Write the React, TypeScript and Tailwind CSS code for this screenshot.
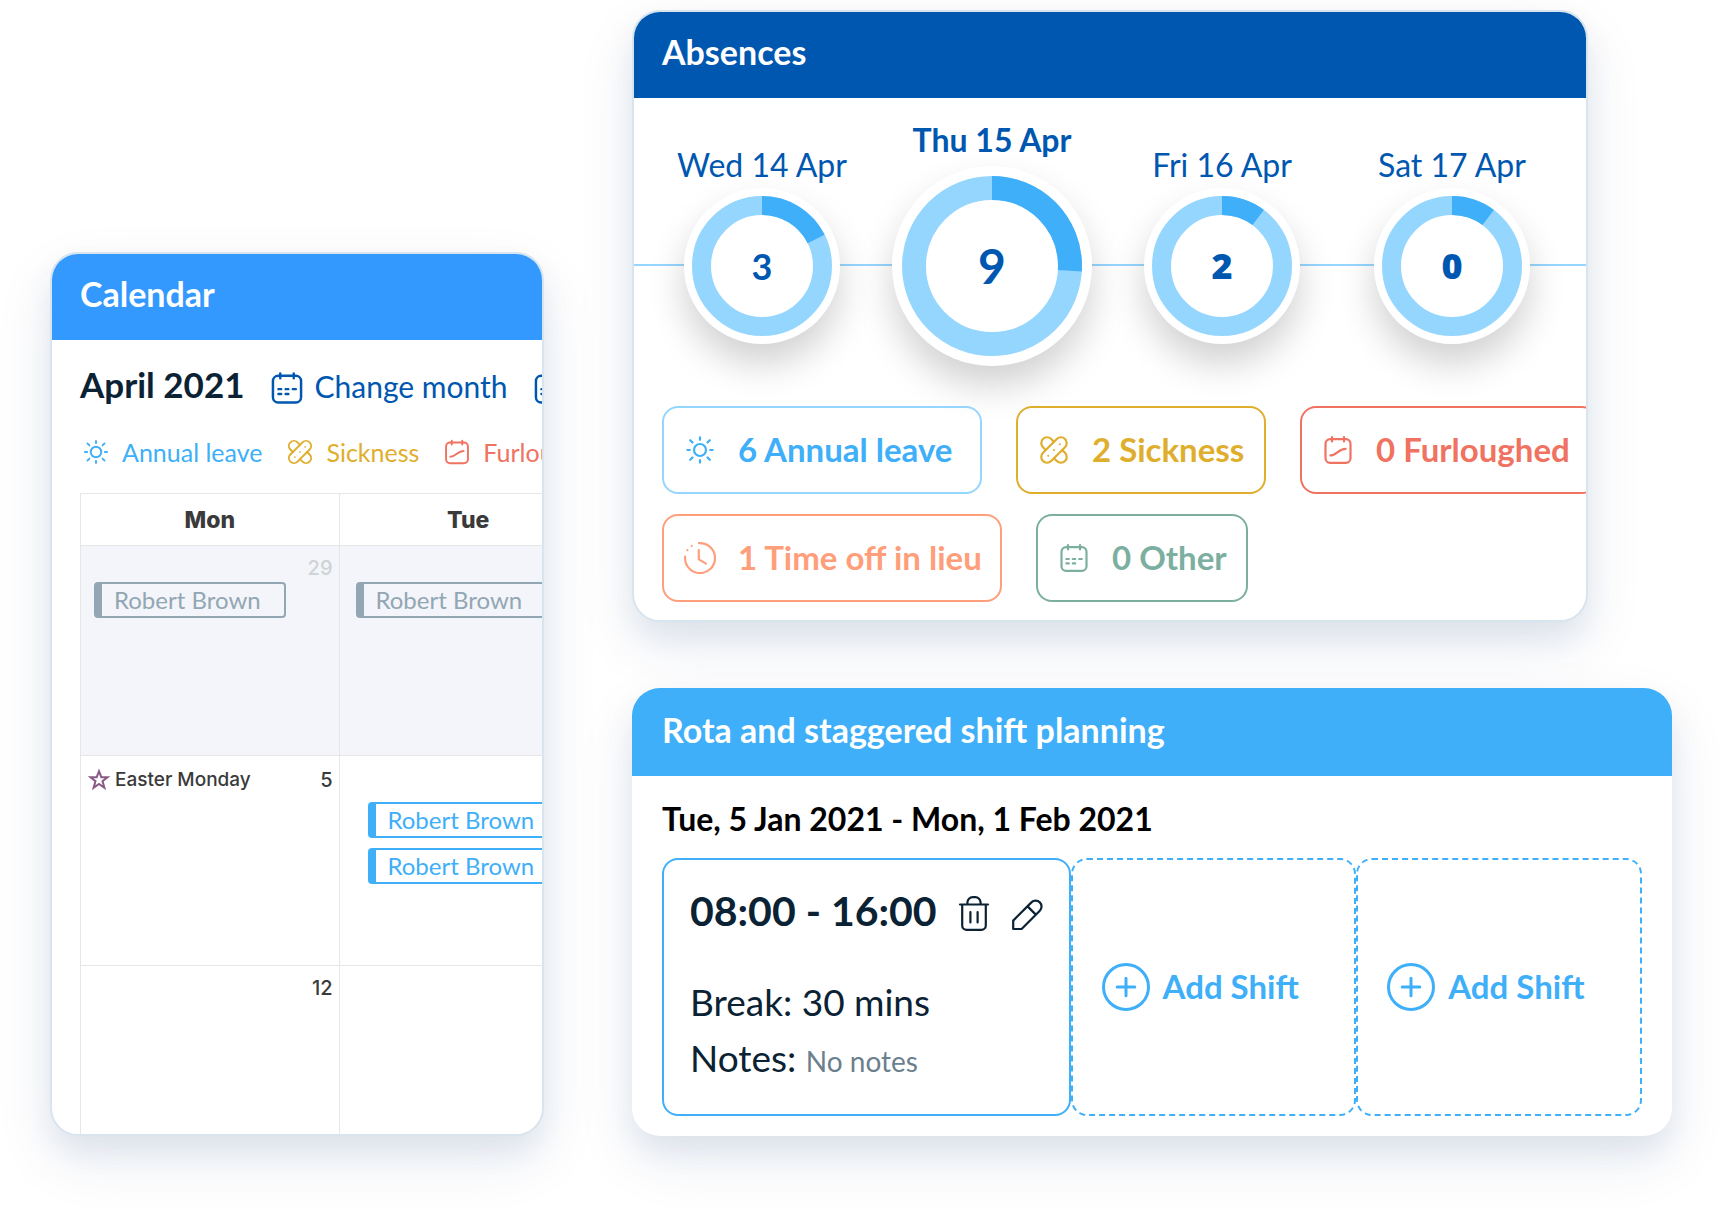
import type { ReactNode } from "react";

type IconProps = { className?: string };

function Icon({ className = "size-8", children }: IconProps & { children: ReactNode }) {
  return (
    <svg
      viewBox="0 0 32 32"
      className={`shrink-0 ${className}`}
      fill="none"
      stroke="currentColor"
      strokeWidth="2.2"
      strokeLinecap="round"
      strokeLinejoin="round"
      aria-hidden="true"
    >
      {children}
    </svg>
  );
}

function SunIcon({ className }: IconProps) {
  return (
    <Icon className={className}>
      <circle cx="16" cy="16" r="6" />
      <path d="M16 3.4v2.4M16 26.2v2.4M3.4 16h2.4M26.2 16h2.4M6.2 6.2l2.3 2.3M23.5 23.5l2.3 2.3M25.8 6.2l-2.3 2.3M8.5 23.5l-2.3 2.3" />
    </Icon>
  );
}

function PlasterIcon({ className }: IconProps) {
  return (
    <Icon className={className}>
      <g transform="translate(16 16) rotate(-45)">
        <rect x="-15.6" y="-5.8" width="31.2" height="11.6" rx="5.8" />
        <path d="M-5.8 -5.8V-9.8A5.8 5.8 0 0 1 5.8 -9.8V-5.8M-5.8 5.8V9.8A5.8 5.8 0 0 0 5.8 9.8V5.8" />
        <path d="M-8.2 0h.01M0 0h.01M8.2 0h.01" strokeWidth="2" />
      </g>
    </Icon>
  );
}

function CalendarFrame() {
  return (
    <>
      <rect x="3.5" y="5.2" width="25" height="23.6" rx="4.6" />
      <path d="M10 3v4.4M22 3v4.4" />
    </>
  );
}

function CalendarIcon({ className }: IconProps) {
  return (
    <Icon className={className}>
      <CalendarFrame />
      <path d="M8.4 17h2.4M14.8 17h2.4M21.2 17h2.6M8.4 21.4h2.4M14.8 21.4h2.4" />
    </Icon>
  );
}

function FurloughIcon({ className }: IconProps) {
  return (
    <Icon className={className}>
      <CalendarFrame />
      <path d="M8.4 21.4C14.5 21.4 16.5 14.8 23.6 14.8" />
    </Icon>
  );
}

function ClockIcon({ className }: IconProps) {
  return (
    <Icon className={className}>
      <path d="M15 1.1A15 15 0 1 1 1.1 14.6" />
      <path d="M14.8 8v9.4L22 21.6" />
      <path d="M7.7 3.8h.01M3.4 8.2h.01" />
    </Icon>
  );
}

function StarIcon() {
  return (
    <svg viewBox="0 0 24 24" className="size-6 shrink-0" fill="none" stroke="#8a5a87" strokeWidth="2" aria-hidden="true">
      <path d="M12 3.2l2.3 6h6.2l-5 3.9 1.9 6.6L12 15.9l-5.4 3.8 1.9-6.6-5-3.9h6.2z" />
    </svg>
  );
}

function TrashIcon() {
  return (
    <svg viewBox="0 0 32 36" className="h-9 w-8" fill="none" stroke="currentColor" strokeWidth="2.2" strokeLinecap="round" aria-hidden="true">
      <path d="M2 9.5h28M9.4 9V7.6A5.4 5.4 0 0 1 14.8 2.2h2.4a5.4 5.4 0 0 1 5.4 5.4V9" />
      <path d="M4.2 10v20.4a4.4 4.4 0 0 0 4.4 4.4h14.8a4.4 4.4 0 0 0 4.4-4.4V10M12.4 17v10.4M19.6 17v10.4" />
    </svg>
  );
}

function PencilIcon() {
  return (
    <Icon>
      <path d="M2.2 30V21.6L20.4 3.4a5.9 5.9 0 0 1 8.4 8.4L10.6 30zM16.6 7.4l8.2 8.2" />
    </Icon>
  );
}

function PlusCircleIcon() {
  return (
    <svg viewBox="0 0 48 48" className="size-12 shrink-0" fill="none" stroke="currentColor" strokeWidth="3" strokeLinecap="round" aria-hidden="true">
      <circle cx="24" cy="24" r="22.5" />
      <path d="M24 15.2v17.6M15.2 24h17.6" />
    </svg>
  );
}

const cardShadow = "shadow-[0_16px_28px_rgba(20,60,120,0.08),0_24px_60px_rgba(20,60,120,0.09)]";

function EventChip({ tone }: { tone: "past" | "current" }) {
  const color = tone === "past" ? "border-[#92a6b3] text-[#92a6b3]" : "border-[#3eaff8] text-[#3eaff8]";
  return (
    <div className={`flex h-9 w-48 items-center rounded border-2 border-l-8 pl-3 text-2xl leading-8 whitespace-nowrap ${color}`}>
      Robert Brown
    </div>
  );
}

const cell = "h-[210px] border border-[#e6e6e6] p-0 align-top";

function CalendarCard() {
  return (
    <section className={`mt-[242px] min-w-0 self-start overflow-hidden rounded-[28px] border-2 border-[#d8e4ee] bg-white ${cardShadow}`}>
      <h2 className="bg-[#3399ff] px-7 pt-5 pb-[26px] text-[34px] leading-10 font-bold text-white">Calendar</h2>
      <div className="overflow-hidden pt-[22px] pl-7">
        <div className="flex items-end gap-6 whitespace-nowrap">
          <h3 className="text-[35px] leading-[44px] font-bold text-[#0a2233]">April 2021</h3>
          <button type="button" className="flex items-end gap-2.5 text-[30px] leading-10 text-[#0057b0]">
            <CalendarIcon className="size-9" />
            Change month
          </button>
          <button type="button" aria-label="Calendar options" className="text-[#0057b0]">
            <CalendarIcon className="size-9" />
          </button>
        </div>
        <ul className="mt-[30px] flex items-center gap-6 pl-0.5 text-[25px] leading-8 whitespace-nowrap">
          <li className="flex items-center gap-3 text-[#3eaff8]">
            <SunIcon className="size-7" />
            Annual leave
          </li>
          <li className="flex items-center gap-3 text-[#e0ae2d]">
            <PlasterIcon className="size-7" />
            Sickness
          </li>
          <li className="flex items-center gap-3 text-[#f07261]">
            <FurloughIcon className="size-7" />
            Furloughed
          </li>
        </ul>
        <table className="mt-[25px] w-[518px] table-fixed border-collapse text-[#3a3a3a]">
          <thead>
            <tr className="h-[52px] font-[Inter,sans-serif] text-[23px] leading-8">
              <th className="border border-[#e6e6e6] p-0 font-extrabold">Mon</th>
              <th className="border border-[#e6e6e6] p-0 font-extrabold">Tue</th>
            </tr>
          </thead>
          <tbody>
            <tr className="bg-[#f3f5fa]">
              <td className={cell}>
                <div className="pt-2 pr-1.5 text-right font-[Inter,sans-serif] text-xl leading-7 font-medium text-[#cfd2d6]">29</div>
                <div className="pl-[13px]">
                  <EventChip tone="past" />
                </div>
              </td>
              <td className={cell}>
                <div className="pt-9 pl-4">
                  <EventChip tone="past" />
                </div>
              </td>
            </tr>
            <tr>
              <td className={cell}>
                <div className="flex items-center px-1.5 pt-2.5 font-[Inter,sans-serif] leading-7 font-medium">
                  <StarIcon />
                  <span className="pl-1 text-[19px]">Easter Monday</span>
                  <span className="ml-auto text-xl leading-7">5</span>
                </div>
              </td>
              <td className={cell}>
                <div className="flex flex-col gap-2.5 pt-[46px] pl-7">
                  <EventChip tone="current" />
                  <EventChip tone="current" />
                </div>
              </td>
            </tr>
            <tr>
              <td className="h-[168px] border border-b-0 border-[#e6e6e6] p-0 align-top">
                <div className="pt-2 pr-1.5 text-right font-[Inter,sans-serif] text-xl leading-7 font-medium">12</div>
              </td>
              <td className="border border-b-0 border-[#e6e6e6] p-0" />
            </tr>
          </tbody>
        </table>
      </div>
    </section>
  );
}

type Day = { label: string; count: number; share: number; active?: boolean; countClass: string };

const days: Day[] = [
  { label: "Wed 14 Apr", count: 3, share: 17.6, countClass: "text-[36px] font-bold" },
  { label: "Thu 15 Apr", count: 9, share: 26, active: true, countClass: "text-[48px] font-bold" },
  { label: "Fri 16 Apr", count: 2, share: 10.2, countClass: "font-['Open_Sans',sans-serif] text-[36px] font-extrabold" },
  { label: "Sat 17 Apr", count: 0, share: 10.2, countClass: "font-['Open_Sans',sans-serif] text-[36px] font-extrabold" },
];

function DayRing({ day }: { day: Day }) {
  const size = day.active ? 180 : 140;
  const stroke = day.active ? 24 : 19;
  const ring = {
    cx: size / 2,
    cy: size / 2,
    r: (size - stroke) / 2,
    strokeWidth: stroke,
    fill: "none",
  };
  return (
    <div className={`flex flex-col items-center text-[#0057b0] ${day.active ? "gap-1.5" : "gap-[3px] pt-[3px]"}`}>
      <div className={`text-[32px] leading-10 whitespace-nowrap ${day.active ? "font-bold" : ""}`}>{day.label}</div>
      <div className={`relative rounded-full bg-white shadow-[0_20px_36px_rgba(0,0,0,0.18)] ${day.active ? "p-2.5" : "p-2"}`}>
        <svg viewBox={`0 0 ${size} ${size}`} className={day.active ? "size-[180px]" : "size-[140px]"} aria-hidden="true">
          <circle {...ring} stroke="#95d6ff" />
          <circle
            {...ring}
            stroke="#3eaff8"
            pathLength={100}
            strokeDasharray={`${day.share} 100`}
            transform={`rotate(-90 ${size / 2} ${size / 2})`}
          />
        </svg>
        <span className={`absolute inset-0 flex items-center justify-center leading-none ${day.countClass}`}>{day.count}</span>
      </div>
    </div>
  );
}

function Tag({ icon, label, className }: { icon: ReactNode; label: string; className: string }) {
  return (
    <div className={`flex h-[88px] shrink-0 items-center gap-[22px] rounded-2xl border-2 pl-5 text-[33px] leading-10 font-bold whitespace-nowrap ${className}`}>
      {icon}
      <span className="pb-[3px]">{label}</span>
    </div>
  );
}

function AbsencesCard() {
  return (
    <section className={`mr-[84px] overflow-hidden rounded-[28px] border-2 border-[#d8e4ee] bg-white ${cardShadow}`}>
      <h2 className="bg-[#0057b0] px-7 pt-5 pb-[26px] text-[34px] leading-10 font-bold text-white">Absences</h2>
      <div className="relative mt-[22px]">
        <div className="absolute inset-x-0 top-36 h-0.5 bg-[#95d6ff]" />
        <div className="relative grid grid-cols-4 items-center pr-[19px] pl-[13px]">
          {days.map((day) => (
            <DayRing key={day.label} day={day} />
          ))}
        </div>
      </div>
      <div className="relative mt-10 flex flex-col gap-5 pb-[18px] pl-7">
        <div className="flex gap-[34px]">
          <Tag icon={<SunIcon />} label="6 Annual leave" className="w-80 border-[#95d6ff] text-[#3eaff8]" />
          <Tag icon={<PlasterIcon />} label="2 Sickness" className="w-[250px] border-[#e0ae2d] text-[#e0ae2d]" />
          <Tag icon={<FurloughIcon />} label="0 Furloughed" className="w-[298px] border-[#f07261] text-[#f07261]" />
        </div>
        <div className="flex gap-[34px]">
          <Tag icon={<ClockIcon />} label="1 Time off in lieu" className="w-[340px] border-[#ff9e7a] text-[#ff9e7a]" />
          <Tag icon={<CalendarIcon />} label="0 Other" className="w-[212px] border-[#7cafa0] text-[#7cafa0]" />
        </div>
      </div>
    </section>
  );
}

function AddShift() {
  return (
    <button
      type="button"
      className="flex items-center gap-[13px] rounded-2xl border-2 border-dashed border-[#3eaff8] pl-[29px] text-[33px] leading-10 font-bold whitespace-nowrap text-[#3eaff8]"
    >
      <PlusCircleIcon />
      <span className="pb-[3px]">Add Shift</span>
    </button>
  );
}

function RotaCard() {
  return (
    <section className={`overflow-hidden rounded-[28px] bg-white ${cardShadow}`}>
      <h2 className="bg-[#3eaff8] px-[30px] pt-[22px] pb-[26px] text-[34px] leading-10 font-bold text-white">
        Rota and staggered shift planning
      </h2>
      <div className="px-[30px] pt-[23px] pb-5">
        <h3 className="text-[32px] leading-10 font-bold text-black">Tue, 5 Jan 2021 - Mon, 1 Feb 2021</h3>
        <div className="mt-[19px] grid grid-cols-[408fr_286fr_286fr]">
          <div className="rounded-2xl border-2 border-[#3eaff8] px-[26px] pt-[27px] pb-7 text-[#0a2233]">
            <div className="flex items-end gap-[21px]">
              <div className="text-[41px] leading-[48px] font-bold whitespace-nowrap">08:00 - 16:00</div>
              <button type="button" aria-label="Delete shift" className="pb-1">
                <TrashIcon />
              </button>
              <button type="button" aria-label="Edit shift" className="pb-1">
                <PencilIcon />
              </button>
            </div>
            <div className="mt-[39px] text-[37px] leading-[56px]">
              <p>Break: 30 mins</p>
              <p>
                Notes: <span className="text-[28px] leading-none text-[#6b7f8d]">No notes</span>
              </p>
            </div>
          </div>
          <AddShift />
          <AddShift />
        </div>
      </div>
    </section>
  );
}

export default function App() {
  return (
    <main className="grid min-h-screen grid-cols-[494fr_1040fr] gap-x-[88px] bg-white px-[50px] pt-2.5 pb-[90px] font-[Lato,sans-serif]">
      <CalendarCard />
      <div className="flex min-w-0 flex-col gap-[66px]">
        <AbsencesCard />
        <RotaCard />
      </div>
    </main>
  );
}
